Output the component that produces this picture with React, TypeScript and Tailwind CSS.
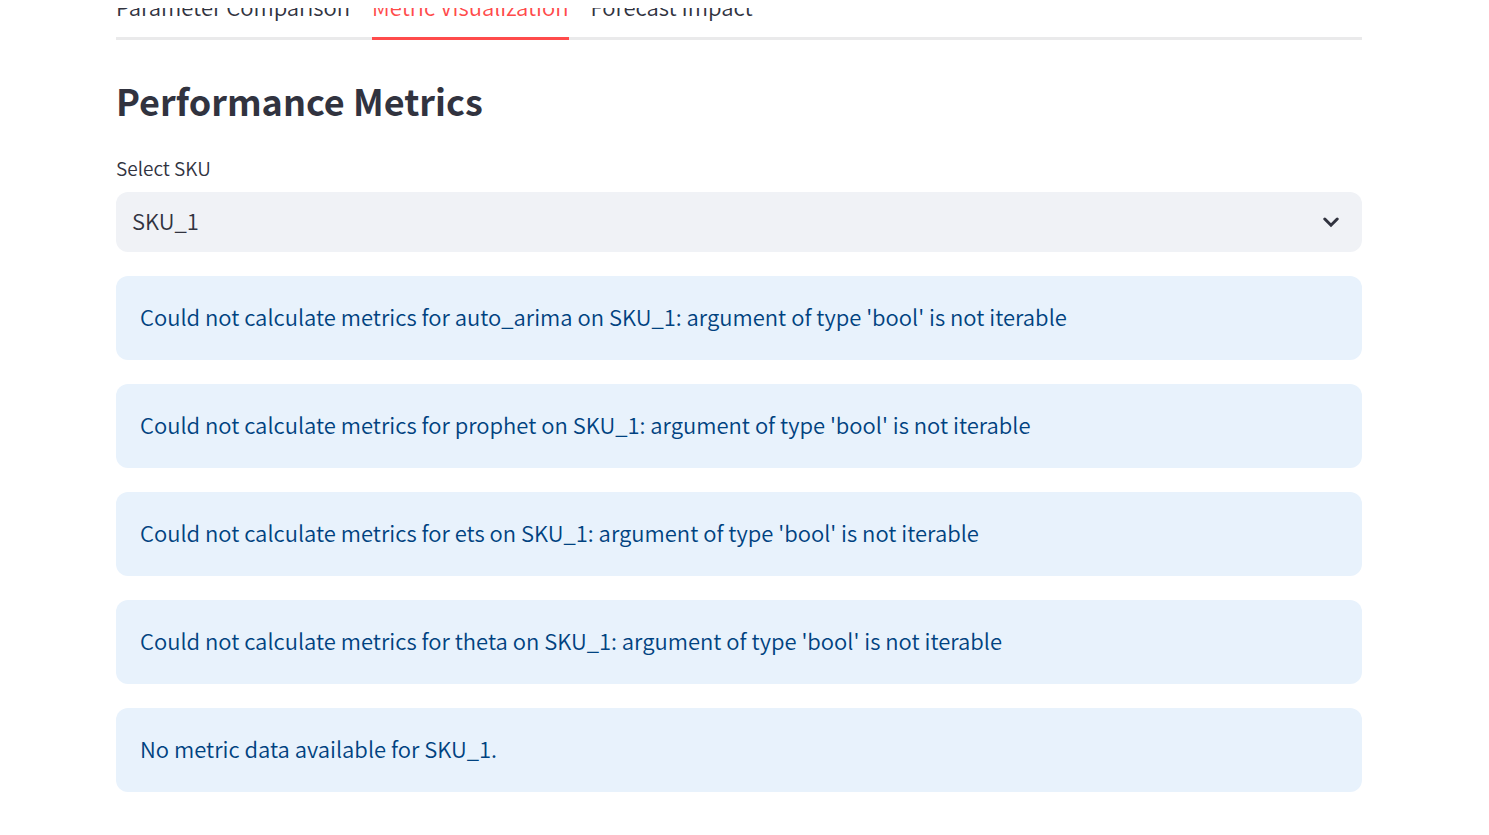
import { useState } from "react";

const tabs = ["Parameter Comparison", "Metric Visualization", "Forecast Impact"];
const models = ["auto_arima", "prophet", "ets", "theta"];

function Notice({ children }: { children: string }) {
  return (
    <div role="alert" className="rounded-xl bg-[#e8f2fc] px-6 pt-[22px] pb-[26px] text-[22px] leading-9 text-[#004280]">
      <p>{children}</p>
    </div>
  );
}

export default function App() {
  const [active, setActive] = useState(tabs[1]);
  const [sku, setSku] = useState("SKU_1");

  return (
    <main className="bg-white pt-2 pr-[127px] pb-10 pl-[116px] font-['Noto_Sans_CJK_SC',sans-serif] font-[350] text-[#31333f]">
      <div
        role="tablist"
        className="flex h-8 items-end gap-[22px] overflow-hidden shadow-[inset_0_-3px_0_#eaeaeb]"
      >
        {tabs.map((tab) => (
          <button
            key={tab}
            type="button"
            role="tab"
            aria-selected={tab === active}
            onClick={() => setActive(tab)}
            className={
              tab === active
                ? "shrink-0 border-b-3 border-[#ff4b4b] pb-[13px] text-[22px] leading-9 text-[#ff4b4b]"
                : "shrink-0 border-b-3 border-transparent pb-[13px] text-[22px] leading-9"
            }
          >
            {tab}
          </button>
        ))}
      </div>

      <h2 className="pt-[34px] text-[36px] leading-[52px] font-semibold">Performance Metrics</h2>

      <div className="flex flex-col gap-6 pt-6">
        <div className="flex flex-col gap-1.5">
          <label htmlFor="sku" className="text-[19px] leading-9">
            Select SKU
          </label>
          <div className="grid items-center">
            <select
              id="sku"
              value={sku}
              onChange={(e) => setSku(e.target.value)}
              className="col-start-1 row-start-1 h-15 w-full appearance-none rounded-xl bg-[#f0f2f6] px-4 pb-1 text-[22px] leading-9"
            >
              <option>SKU_1</option>
            </select>
            <svg
              viewBox="0 0 16 16"
              aria-hidden="true"
              className="pointer-events-none col-start-1 row-start-1 mr-[23px] size-4 justify-self-end fill-none stroke-[#31333f]"
            >
              <path d="M1.8 5L8 11.2L14.2 5" strokeWidth="3" strokeLinecap="round" />
            </svg>
          </div>
        </div>
        {models.map((model) => (
          <Notice key={model}>
            {`Could not calculate metrics for ${model} on ${sku}: argument of type 'bool' is not iterable`}
          </Notice>
        ))}
        <Notice>{`No metric data available for ${sku}.`}</Notice>
      </div>
    </main>
  );
}
